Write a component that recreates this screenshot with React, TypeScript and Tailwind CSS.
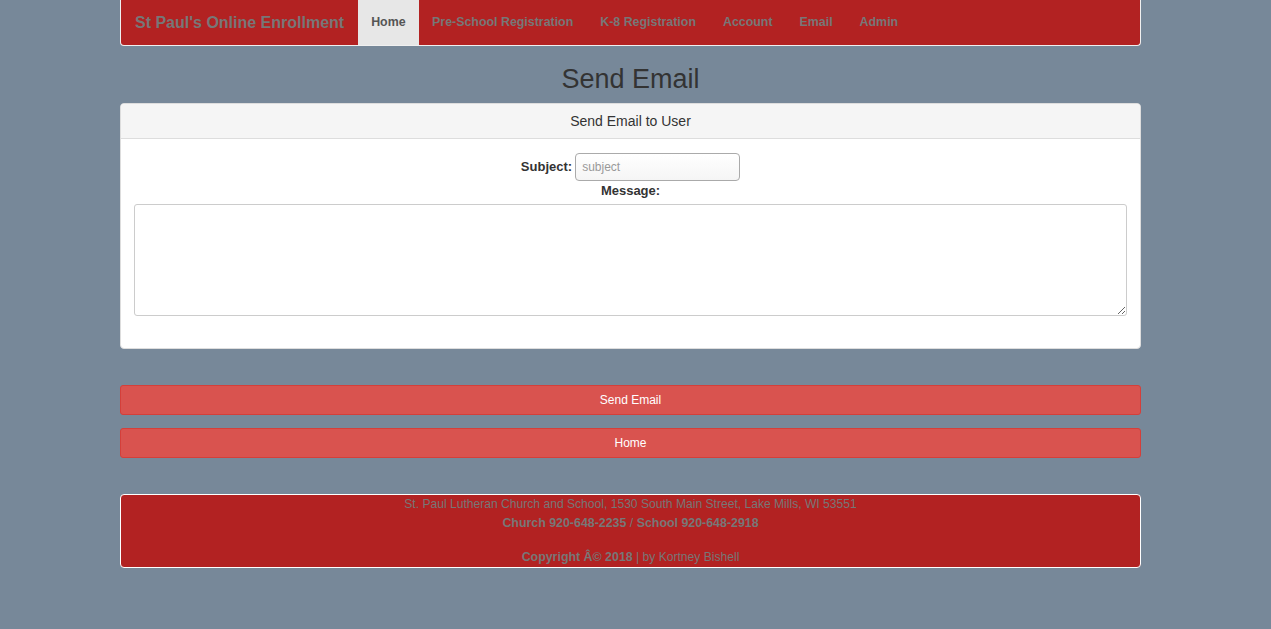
import React from 'react';

const navLinks = ['Pre-School Registration', 'K-8 Registration', 'Account', 'Email', 'Admin'];

const App: React.FC = () => {
    return (
        <div className="min-h-[629px] bg-[#778899] font-['Liberation_Sans',Arial,sans-serif] text-[13px] text-[#333]">
            <div className="ml-[120px] w-[1021px]">
                <nav className="flex h-[46px] items-stretch rounded-b-[4px] border border-t-0 border-[#f0f0f0] bg-[#b22222]">
                    <div className="flex items-center px-[14px] text-[16px] font-bold text-[#777]">St Paul's Online Enrollment</div>
                    <div className="flex items-stretch text-[12.4px]">
                        <div className="flex items-center bg-[#e7e7e7] px-[13px] font-bold text-[#555]">Home</div>
                        {navLinks.map((link) => (
                            <div key={link} className="flex items-center px-[13.5px] font-bold text-[#777]">
                                {link}
                            </div>
                        ))}
                    </div>
                </nav>

                <h2 className="mt-[17px] mb-[8px] text-center text-[27px] leading-[32px] text-[#333]">Send Email</h2>

                <div className="rounded-[4px] border border-[#ddd] bg-white">
                    <div className="flex h-[35px] items-center justify-center rounded-t-[3px] border-b border-[#ddd] bg-[#f5f5f5] text-[14px] text-[#333]">
                        Send Email to User
                    </div>
                    <div className="px-[13px] pt-[14px] pb-[32px]">
                        <div className="flex items-center justify-center gap-[3px]">
                            <span className="font-bold">Subject:</span>
                            <input
                                placeholder="subject"
                                className="h-[28px] w-[165px] rounded-[4px] border border-[#aaa] bg-gradient-to-b from-white to-[#f5f5f5] px-[6px] text-[12px] text-[#333] placeholder:text-[#999]"
                            />
                        </div>
                        <div className="mt-[1px] text-center font-bold leading-[18px]">Message:</div>
                        <textarea className="mt-[4px] block h-[112px] w-full rounded-[3px] border border-[#ccc] bg-white" />
                    </div>
                </div>

                <div className="mt-[36px] flex flex-col gap-[13px]">
                    <button className="h-[30px] w-full rounded-[3px] border border-[#d43f3a] bg-[#d9534f] text-[12px] text-white">Send Email</button>
                    <button className="h-[30px] w-full rounded-[3px] border border-[#d43f3a] bg-[#d9534f] text-[12px] text-white">Home</button>
                </div>

                <footer className="mt-[36px] h-[74px] rounded-[4px] border border-white bg-[#b22222] text-center text-[12.1px] leading-[18px] text-[#777]">
                    <div>St. Paul Lutheran Church and School, 1530 South Main Street, Lake Mills, WI 53551</div>
                    <div className="mt-[1px] text-[12.4px]">
                        <b>Church 920-648-2235</b> / <b>School 920-648-2918</b>
                    </div>
                    <div className="mt-[16px]">
                        <b className="text-[12.4px]">Copyright Â© 2018</b> | by Kortney Bishell
                    </div>
                </footer>
            </div>
        </div>
    );
};

export default App;
